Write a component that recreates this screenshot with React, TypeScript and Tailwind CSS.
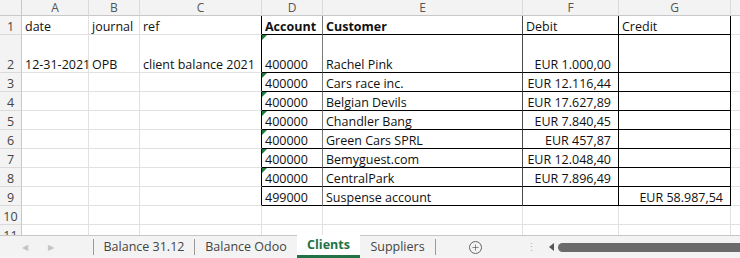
import { Plus } from "lucide-react";

const COLS = [
  { key: "A", w: 67 },
  { key: "B", w: 51 },
  { key: "C", w: 122 },
  { key: "D", w: 61 },
  { key: "E", w: 200 },
  { key: "F", w: 96 },
  { key: "G", w: 112 },
];

type Cell = { text?: string; right?: boolean; bold?: boolean; flag?: boolean };

const clients = [
  ["400000", "Cars race inc.", "EUR 12.116,44"],
  ["400000", "Belgian Devils", "EUR 17.627,89"],
  ["400000", "Chandler Bang", "EUR 7.840,45"],
  ["400000", "Green Cars SPRL", "EUR 457,87"],
  ["400000", "Bemyguest.com", "EUR 12.048,40"],
  ["400000", "CentralPark", "EUR 7.896,49"],
];

const rows: { n: number; h: number; cells: Cell[] }[] = [
  {
    n: 1,
    h: 19,
    cells: [
      { text: "date" },
      { text: "journal" },
      { text: "ref" },
      { text: "Account", bold: true },
      { text: "Customer", bold: true },
      { text: "Debit" },
      { text: "Credit" },
    ],
  },
  {
    n: 2,
    h: 38,
    cells: [
      { text: "12-31-2021" },
      { text: "OPB" },
      { text: "client balance 2021" },
      { text: "400000", flag: true },
      { text: "Rachel Pink" },
      { text: "EUR 1.000,00", right: true },
      {},
    ],
  },
  ...clients.map((c, i) => ({
    n: i + 3,
    h: 19,
    cells: [{}, {}, {}, { text: c[0], flag: true }, { text: c[1] }, { text: c[2], right: true }, {}],
  })),
  {
    n: 9,
    h: 19,
    cells: [{}, {}, {}, { text: "499000" }, { text: "Suspense account" }, {}, { text: "EUR 58.987,54", right: true }],
  },
  { n: 10, h: 19, cells: [{}, {}, {}, {}, {}, {}, {}] },
  { n: 11, h: 19, cells: [{}, {}, {}, {}, {}, {}, {}] },
];

// border colours for the bordered block D1:G9
const rightBorder = (col: number, inTable: boolean) => {
  if (!inTable) return "border-r-[#e1e1e1]";
  if (col === 2) return "border-r-black";
  if (col === 3) return "border-r-[#7a7a7a]";
  if (col === 4) return "border-r-[#4a4a4a]";
  if (col >= 5) return "border-r-black";
  return "border-r-[#e1e1e1]";
};

function Row({ n, h, cells }: { n: number; h: number; cells: Cell[] }) {
  const inTable = n <= 9;
  return (
    <div className="flex shrink-0" style={{ height: h }}>
      <div className="w-[22px] shrink-0 flex items-end justify-center bg-[#f3f3f3] border-r border-r-[#c8c8c8] border-b border-b-[#dadada] text-[#444] text-[12.5px] leading-[15px]">
        {n}
      </div>
      {cells.map((c, i) => {
        const tableCol = inTable && i >= 3;
        return (
          <div
            key={i}
            style={{ width: COLS[i].w }}
            className={`relative shrink-0 flex items-end leading-[14px] border-r border-b whitespace-nowrap ${rightBorder(
              i,
              inTable
            )} ${tableCol ? "border-b-black" : "border-b-[#e1e1e1]"} ${
              c.right ? "justify-end pr-[7px]" : "pl-[3px]"
            } ${c.bold ? "font-bold" : ""}`}
          >
            {c.flag && (
              <span className="absolute left-0 top-0 w-0 h-0 border-t-[5px] border-t-[#1e7b3e] border-r-[5px] border-r-transparent" />
            )}
            {c.text}
          </div>
        );
      })}
      <div className="flex-1 border-b border-b-[#e1e1e1]" />
    </div>
  );
}

function SheetTabs() {
  return (
    <div className="h-[23px] shrink-0 flex items-stretch bg-[#f3f3f3] border-t border-t-[#c6c6c6] text-[12.5px] leading-[16px] text-[#444]">
      <div className="w-[93px] shrink-0 flex items-center pl-[22px] gap-[20px] text-[8px] text-[#c4c4c4]">
        <span>◀</span>
        <span>▶</span>
      </div>
      <div className="w-[101px] shrink-0 flex items-center justify-center border-l border-l-[#9a9a9a] my-[3px]">
        Balance 31.12
      </div>
      <div className="w-[103px] shrink-0 flex items-center justify-center border-l border-l-[#9a9a9a] my-[3px]">
        Balance Odoo
      </div>
      <div className="w-[63px] shrink-0 flex items-center justify-center bg-white border-b-[3px] border-b-[#217346] font-bold text-[#217346] -mt-[1px]">
        Clients
      </div>
      <div className="w-[76px] shrink-0 flex items-center justify-center border-r border-r-[#9a9a9a] my-[3px]">
        Suppliers
      </div>
      <div className="w-[78px] shrink-0 flex items-center justify-center">
        <span className="w-[13px] h-[13px] rounded-full border border-[#666] flex items-center justify-center">
          <Plus size={9} strokeWidth={1.8} color="#555" />
        </span>
      </div>
      <div className="w-[35px] shrink-0 flex items-center justify-center text-[#b5b5b5] text-[11px]">⋮</div>
      <div className="flex-1 flex items-center gap-[4px]">
        <span className="w-0 h-0 border-y-[4px] border-y-transparent border-r-[5px] border-r-[#555]" />
        <span className="flex-1 h-[9px] rounded-l-full bg-[#6b6b6b]" />
      </div>
    </div>
  );
}

export default function App() {
  return (
    <div className="w-[740px] h-[258px] overflow-hidden bg-white flex flex-col text-[12.5px] text-[#111] font-['Open_Sans','Liberation_Sans',sans-serif]">
      <div className="flex h-[16px] shrink-0 bg-[#f3f3f3] text-[#555] text-[12px] leading-[15px]">
        <div className="w-[22px] shrink-0 border-r border-r-[#c8c8c8] border-b border-b-[#c8c8c8]" />
        {COLS.map((c) => (
          <div
            key={c.key}
            style={{ width: c.w }}
            className="shrink-0 flex items-center justify-center border-r border-r-[#dadada] border-b border-b-[#c8c8c8]"
          >
            {c.key}
          </div>
        ))}
        <div className="flex-1 border-b border-b-[#c8c8c8]" />
      </div>
      <div className="flex-1 flex flex-col overflow-hidden">
        {rows.map((r) => (
          <Row key={r.n} {...r} />
        ))}
      </div>
      <SheetTabs />
    </div>
  );
}
